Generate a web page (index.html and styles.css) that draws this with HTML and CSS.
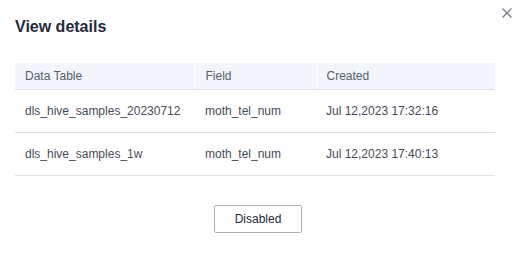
FILE: index.html
```html
<!DOCTYPE html>
<html lang="en">
<head>
    <meta charset="UTF-8">
    <meta name="viewport" content="width=device-width, initial-scale=1.0">
    <title>View details</title>
    <link rel="stylesheet" href="styles.css">
</head>
<body>

    <div class="dialog">
        <div class="dialog-header">
            <h2>View details</h2>
            <button class="close-btn" aria-label="Close">
                <svg width="10" height="10" viewBox="0 0 10 10">
                    <path d="M0.5 0.5L9.5 9.5M9.5 0.5L0.5 9.5" stroke="#71757f" stroke-width="1.2" fill="none"/>
                </svg>
            </button>
        </div>

        <div class="table-container">
            <table>
                <thead>
                    <tr>
                        <th class="col-table">Data Table</th>
                        <th class="col-field">Field</th>
                        <th class="col-created">Created</th>
                    </tr>
                </thead>
                <tbody>
                    <tr>
                        <td>dls_hive_samples_20230712</td>
                        <td>moth_tel_num</td>
                        <td>Jul 12,2023 17:32:16</td>
                    </tr>
                    <tr>
                        <td>dls_hive_samples_1w</td>
                        <td>moth_tel_num</td>
                        <td>Jul 12,2023 17:40:13</td>
                    </tr>
                </tbody>
            </table>
        </div>

        <div class="dialog-footer">
            <button class="btn">Disabled</button>
        </div>
    </div>

</body>
</html>
```

FILE: styles.css
```css
body {
    margin: 0;
    font-family: "Liberation Sans", Arial, sans-serif;
    background-color: #fff;
    color: #252b3a;
}

.dialog {
    width: 529px;
    height: 254px;
}

.dialog-header {
    position: relative;
    height: 52px;
    padding-left: 15px;
}

h2 {
    margin: 0;
    padding-top: 17px;
    font-size: 16px;
    line-height: 20px;
    font-weight: bold;
    color: #252b3a;
}

.close-btn {
    position: absolute;
    top: 8px;
    right: 17px;
    width: 10px;
    height: 10px;
    padding: 0;
    border: none;
    background: none;
    display: flex;
}

.table-container {
    margin: 11px 34px 0 15px;
}

table {
    width: 480px;
    border-collapse: collapse;
    table-layout: fixed;
    font-size: 12px;
}

th, td {
    box-sizing: border-box;
    text-align: left;
    padding: 0 10px;
}

th {
    height: 26px;
    font-weight: normal;
    color: #575d6c;
    background-color: #f2f5fc;
    border-bottom: 1px solid #dfe1e6;
    border-right: 1px solid #fff;
}

th:last-child {
    border-right: none;
}

.col-table {
    width: 180px;
}

.col-field {
    width: 121px;
}

td {
    height: 43px;
    padding-top: 1px;
    border-bottom: 1px solid #dfe1e6;
    color: #464b56;
}

.dialog-footer {
    display: flex;
    justify-content: center;
    padding: 29px 28px 0 15px;
}

.btn {
    width: 88px;
    height: 28px;
    font-family: inherit;
    font-size: 12px;
    color: #252b3a;
    background-color: #fff;
    border: 1px solid #adb0b8;
    border-radius: 2px;
}
```
